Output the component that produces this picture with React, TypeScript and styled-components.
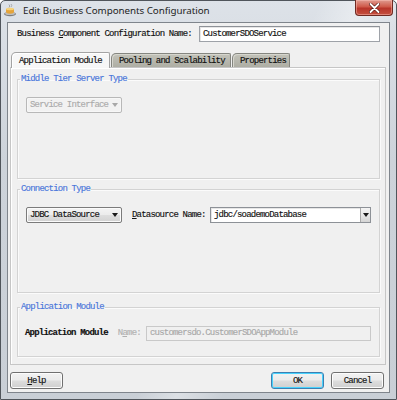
import { ReactElement, ReactNode } from "react";
import styled, { createGlobalStyle } from "styled-components";

const GlobalStyle = createGlobalStyle`
  html, body {
    margin: 0;
    padding: 0;
    background: #ffffff;
  }
  body {
    width: 397px;
    height: 400px;
    overflow: hidden;
  }
  * {
    box-sizing: border-box;
  }
`;

const Window = styled.div`
  width: 397px;
  height: 400px;
  display: flex;
  flex-direction: column;
  background:
    linear-gradient(115deg, transparent 55%, rgba(255, 255, 255, 0.35) 62%, transparent 70%),
    linear-gradient(180deg, #dde2e8 0%, #cdd3da 40%, #c9cfd6 100%);
  border: 1px solid #50555b;
  border-radius: 5px 5px 0 0;
  padding: 0 6px 6px;
  font-family: "Liberation Mono", "Courier New", monospace;
  font-size: 9px;
  letter-spacing: -0.8px;
  color: #111111;
  -webkit-text-stroke: 0.15px currentColor;
`;

const TitleBar = styled.div`
  height: 21px;
  display: flex;
  align-items: flex-start;
  margin: 0 -3px 0 -5px;
`;

const AppIcon = styled.svg`
  flex: none;
  margin: 2px 0 0 1px;
`;

const Title = styled.div`
  font-family: "Noto Sans", "Open Sans", sans-serif;
  font-size: 9.8px;
  letter-spacing: -0.05px;
  -webkit-text-stroke: 0;
  color: #1e1e1e;
  margin: 3px 0 0 6px;
  line-height: 13px;
`;

const CloseButton = styled.div`
  margin-left: auto;
  width: 38px;
  height: 16px;
  margin-top: -1px;
  display: flex;
  align-items: center;
  justify-content: center;
  background: linear-gradient(180deg, #e09a8f 0%, #cf5a4a 45%, #b8352a 55%, #c4503f 100%);
  border: 1px solid #6f2a22;
  border-top: none;
  border-radius: 0 0 4px 4px;
  box-shadow: inset 0 0 0 1px rgba(255, 200, 190, 0.45);
`;

const Client = styled.div`
  flex: 1;
  display: flex;
  flex-direction: column;
  background: #f0f0f0;
  border: 1px solid #7f858c;
  padding: 0 3px 2px 2px;
`;

const NameRow = styled.div`
  display: flex;
  align-items: center;
  justify-content: space-between;
  height: 16px;
  margin-top: 3px;
  padding: 0 6px 0 7px;
`;

const Label = styled.span<{ $muted?: boolean; $bold?: boolean }>`
  white-space: nowrap;
  color: ${(p) => (p.$muted ? "#b0b0b0" : "#111111")};
  font-weight: ${(p) => (p.$bold ? "bold" : "normal")};
  u {
    text-decoration-thickness: 1px;
  }
`;

const TextField = styled.div<{ $width: number; $disabled?: boolean }>`
  width: ${(p) => p.$width}px;
  height: 16px;
  flex: none;
  display: flex;
  align-items: center;
  padding-left: 3px;
  white-space: nowrap;
  overflow: hidden;
  background: ${(p) => (p.$disabled ? "#f0f0f0" : "#ffffff")};
  color: ${(p) => (p.$disabled ? "#a8a8a8" : "#111111")};
  border: 1px solid ${(p) => (p.$disabled ? "#c9c9c9" : "#9ea2a8")};
  border-top-color: ${(p) => (p.$disabled ? "#c9c9c9" : "#8d9197")};
  box-shadow: ${(p) => (p.$disabled ? "none" : "inset 1px 1px 0 #e6e6e6")};
`;

const TabArea = styled.div`
  flex: 1;
  display: flex;
  flex-direction: column;
  margin-top: 11px;
`;

const TabStrip = styled.div`
  height: 14px;
  display: flex;
  align-items: flex-end;
  gap: 1px;
  padding-left: 1px;
`;

const Tab = styled.div<{ $active?: boolean; $width: number }>`
  position: relative;
  z-index: ${(p) => (p.$active ? 2 : 1)};
  width: ${(p) => p.$width}px;
  height: ${(p) => (p.$active ? 16 : 14)}px;
  margin-bottom: ${(p) => (p.$active ? -1 : 0)}px;
  padding: ${(p) => (p.$active ? "3px" : "2px")} 0 0 7px;
  white-space: nowrap;
  color: #101010;
  background: ${(p) =>
    p.$active ? "#f7f7f7" : "linear-gradient(180deg, #c2c2b9 0%, #aeaea4 100%)"};
  border: 1px solid ${(p) => (p.$active ? "#a3a3a3" : "#858680")};
  border-bottom: none;
  border-radius: 5px 2px 0 0;
  box-shadow: inset 1px 1px 0 ${(p) => (p.$active ? "#ffffff" : "#d6d6ce")};
`;

const TabPanel = styled.div`
  flex: 1;
  display: flex;
  flex-direction: column;
  background: #f0f0f0;
  border: 1px solid #c6c6c6;
  box-shadow: inset 1px 1px 0 #ffffff;
  padding: 6px 5px 7px 6px;
`;

const Group = styled.fieldset<{ $height: number; $top: number }>`
  height: ${(p) => p.$height}px;
  margin: ${(p) => p.$top}px 0 0;
  padding: 13px 8px 0 8px;
  min-width: 0;
  border: 1px solid #d3d3d3;
  box-shadow: inset 1px 1px 0 #fbfbfb, 1px 1px 0 #fbfbfb;
  display: flex;
  align-items: flex-start;
  gap: 10px;
`;

const Legend = styled.legend`
  line-height: 10px;
  padding: 0 1px;
  margin-left: -6px;
  color: #4a76da;
`;

const Dropdown = styled.div<{ $disabled?: boolean }>`
  width: 96px;
  height: 16px;
  flex: none;
  display: flex;
  align-items: center;
  padding: 0 3px;
  white-space: nowrap;
  border-radius: 2px;
  color: ${(p) => (p.$disabled ? "#ababab" : "#111111")};
  border: 1px solid ${(p) => (p.$disabled ? "#b8b8b8" : "#7b7b7b")};
  background: ${(p) =>
    p.$disabled
      ? "#f2f2f2"
      : "linear-gradient(180deg, #f4f4f4 0%, #ececec 48%, #dedede 52%, #d2d2d2 100%)"};
  box-shadow: inset 0 0 0 1px ${(p) => (p.$disabled ? "#f7f7f7" : "#fbfbfb")};
`;

const Arrow = styled.span<{ $color: string }>`
  margin-left: auto;
  width: 0;
  height: 0;
  border-left: 3.5px solid transparent;
  border-right: 3.5px solid transparent;
  border-top: 4px solid ${(p) => p.$color};
`;

const ComboField = styled.div`
  width: 161px;
  height: 16px;
  margin-left: auto;
  flex: none;
  display: flex;
  align-items: stretch;
  background: #ffffff;
  border: 1px solid #8d9197;
  box-shadow: inset 1px 1px 0 #e6e6e6;
`;

const ComboText = styled.span`
  flex: 1;
  padding-left: 3px;
  display: flex;
  align-items: center;
  white-space: nowrap;
`;

const ComboButton = styled.span`
  width: 10px;
  display: flex;
  align-items: center;
  justify-content: center;
  border-left: 1px solid #a9a9a9;
  background: linear-gradient(180deg, #f4f4f4 0%, #e8e8e8 50%, #d4d4d4 100%);
`;

const Row = styled.div`
  display: flex;
  align-items: center;
  width: 100%;
  height: 16px;
`;

const ButtonBar = styled.div`
  display: flex;
  align-items: center;
  gap: 7px;
  margin: 7px 2px 1px 0;
`;

const Button = styled.div<{ $default?: boolean; $push?: boolean }>`
  width: 53px;
  height: 17px;
  display: flex;
  align-items: center;
  justify-content: center;
  margin-left: ${(p) => (p.$push ? "auto" : "0")};
  border-radius: 3px;
  border: 1px solid ${(p) => (p.$default ? "#3c7fb1" : "#707070")};
  background: linear-gradient(180deg, #f2f2f2 0%, #ebebeb 48%, #dddddd 52%, #cfcfcf 100%);
  box-shadow: inset 0 0 0 1px ${(p) => (p.$default ? "#48d2fd" : "#fcfcfc")};
  color: #111111;
`;

function JDevIcon(): ReactElement {
  return (
    <AppIcon width="14" height="14" viewBox="0 0 14 14">
      <ellipse cx="7" cy="11" rx="6" ry="2.2" fill="#7d7d7d" />
      <ellipse cx="7" cy="10.4" rx="5" ry="1.6" fill="#bdbdbd" />
      <path d="M3 6 h8 v2.5 a4 2.2 0 0 1 -8 0 z" fill="#e5a43a" />
      <ellipse cx="7" cy="6" rx="4" ry="1.2" fill="#f6d27a" />
      <path d="M6 1.5 q1.5 1.5 0 3 M8 1 q1.5 1.5 0 3" stroke="#9a9a9a" strokeWidth="0.8" fill="none" />
    </AppIcon>
  );
}

type GroupBoxProps = {
  title: string;
  height: number;
  top: number;
  children: ReactNode;
};

function GroupBox(props: GroupBoxProps): ReactElement {
  return (
    <Group $height={props.height} $top={props.top}>
      <Legend>{props.title}</Legend>
      {props.children}
    </Group>
  );
}

function App(): ReactElement {
  return (
    <>
      <GlobalStyle />
      <Window>
        <TitleBar>
          <JDevIcon />
          <Title>Edit Business Components Configuration</Title>
          <CloseButton>
            <svg width="11" height="10" viewBox="0 0 11 10">
              <path
                d="M1.5 1 L9.5 9 M9.5 1 L1.5 9"
                stroke="#5a1a14"
                strokeWidth="3.2"
                strokeLinecap="round"
              />
              <path
                d="M1.5 1 L9.5 9 M9.5 1 L1.5 9"
                stroke="#ffffff"
                strokeWidth="1.8"
                strokeLinecap="round"
              />
            </svg>
          </CloseButton>
        </TitleBar>
        <Client>
          <NameRow>
            <Label>
              Business <u>C</u>omponent Configuration Name:
            </Label>
            <TextField $width={181}>CustomerSDOService</TextField>
          </NameRow>
          <TabArea>
            <TabStrip>
              <Tab $active $width={99}>
                Application Module
              </Tab>
              <Tab $width={120}>Pooling and Scalability</Tab>
              <Tab $width={58}>Properties</Tab>
            </TabStrip>
            <TabPanel>
              <GroupBox title="Middle Tier Server Type" height={105} top={0}>
                <Dropdown $disabled>
                  Service Interface
                  <Arrow $color="#a8a8a8" />
                </Dropdown>
              </GroupBox>
              <GroupBox title="Connection Type" height={109} top={5}>
                <Row>
                  <Dropdown>
                    JDBC DataSource
                    <Arrow $color="#1a1a1a" />
                  </Dropdown>
                  <Label style={{ marginLeft: 10 }}>
                    <u>D</u>atasource Name:
                  </Label>
                  <ComboField>
                    <ComboText>jdbc/soademoDatabase</ComboText>
                    <ComboButton>
                      <Arrow $color="#1a1a1a" style={{ margin: 0 }} />
                    </ComboButton>
                  </ComboField>
                </Row>
              </GroupBox>
              <GroupBox title="Application Module" height={55} top={9}>
                <Row>
                  <Label $bold style={{ marginLeft: -1 }}>
                    Application Module
                  </Label>
                  <Label $muted style={{ marginLeft: 10 }}>
                    N<u>a</u>me:
                  </Label>
                  <TextField $width={225} $disabled style={{ marginLeft: "auto", height: 15 }}>
                    customersdo.CustomerSDOAppModule
                  </TextField>
                </Row>
              </GroupBox>
            </TabPanel>
          </TabArea>
          <ButtonBar>
            <Button>
              <u>H</u>elp
            </Button>
            <Button $default $push>
              OK
            </Button>
            <Button>Cancel</Button>
          </ButtonBar>
        </Client>
      </Window>
    </>
  );
}

export default App;
